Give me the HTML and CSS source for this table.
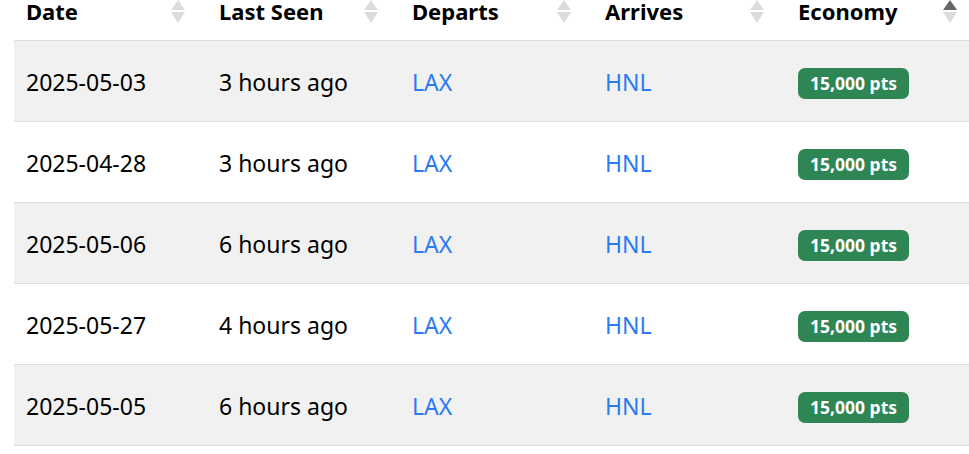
FILE: index.html
```html
<!DOCTYPE html>
<html lang="en">
<head>
<meta charset="utf-8">
<title>Awards</title>
<link rel="stylesheet" href="styles.css">
</head>
<body>
<table class="awards">
  <colgroup><col><col><col><col><col></colgroup>
  <thead>
    <tr>
      <th><div class="th-inner"><span>Date</span><svg class="sort" viewBox="0 0 14 23" width="14" height="23"><path class="up" d="M7 0 L14 10 L0 10 Z"/><path class="down" d="M0 12 L14 12 L7 23 Z"/></svg></div></th>
      <th><div class="th-inner"><span>Last Seen</span><svg class="sort" viewBox="0 0 14 23" width="14" height="23"><path class="up" d="M7 0 L14 10 L0 10 Z"/><path class="down" d="M0 12 L14 12 L7 23 Z"/></svg></div></th>
      <th><div class="th-inner"><span>Departs</span><svg class="sort" viewBox="0 0 14 23" width="14" height="23"><path class="up" d="M7 0 L14 10 L0 10 Z"/><path class="down" d="M0 12 L14 12 L7 23 Z"/></svg></div></th>
      <th><div class="th-inner"><span>Arrives</span><svg class="sort" viewBox="0 0 14 23" width="14" height="23"><path class="up" d="M7 0 L14 10 L0 10 Z"/><path class="down" d="M0 12 L14 12 L7 23 Z"/></svg></div></th>
      <th><div class="th-inner"><span>Economy</span><svg class="sort" viewBox="0 0 14 23" width="14" height="23"><path class="up active" d="M7 0 L14 10 L0 10 Z"/><path class="down" d="M0 12 L14 12 L7 23 Z"/></svg></div></th>
    </tr>
  </thead>
  <tbody>
    <tr><td>2025-05-03</td><td>3 hours ago</td><td><a href="#">LAX</a></td><td><a href="#">HNL</a></td><td><span class="badge">15,000 pts</span></td></tr>
    <tr><td>2025-04-28</td><td>3 hours ago</td><td><a href="#">LAX</a></td><td><a href="#">HNL</a></td><td><span class="badge">15,000 pts</span></td></tr>
    <tr><td>2025-05-06</td><td>6 hours ago</td><td><a href="#">LAX</a></td><td><a href="#">HNL</a></td><td><span class="badge">15,000 pts</span></td></tr>
    <tr><td>2025-05-27</td><td>4 hours ago</td><td><a href="#">LAX</a></td><td><a href="#">HNL</a></td><td><span class="badge">15,000 pts</span></td></tr>
    <tr><td>2025-05-05</td><td>6 hours ago</td><td><a href="#">LAX</a></td><td><a href="#">HNL</a></td><td><span class="badge">15,000 pts</span></td></tr>
  </tbody>
</table>
</body>
</html>
```
FILE: styles.css
```css
html, body {
  margin: 0;
  padding: 0;
  background: #fff;
  overflow: hidden;
}
body {
  font-family: "Noto Sans", "Open Sans", sans-serif;
  color: #000;
  padding-left: 14px;
}
.awards {
  border-collapse: collapse;
  table-layout: fixed;
  width: 965px;
}
.awards col {
  width: 193px;
}
.awards th {
  text-align: left;
  font-weight: 700;
  font-size: 22px;
  line-height: 22px;
  padding: 0 22px 17px 12px;
  border-bottom: 1px solid #dedede;
  color: #000;
}
.th-inner {
  display: flex;
  justify-content: space-between;
  align-items: flex-start;
}
.sort {
  flex: none;
  display: block;
}
.sort path {
  fill: #dcdcdc;
}
.sort path.active {
  fill: #666;
}
.awards td {
  height: 78px;
  padding: 2px 12px 0;
  font-size: 23px;
  vertical-align: middle;
  border-bottom: 1px solid #dedede;
  white-space: nowrap;
}
.awards tbody tr:nth-child(odd) td {
  background: #f1f1f1;
}
.awards a {
  color: #2a7bf2;
  text-decoration: none;
}
.badge {
  display: inline-block;
  background: #2e8655;
  color: #fff;
  font-weight: 700;
  font-size: 17.5px;
  line-height: 31px;
  padding: 0 12px;
  border-radius: 7px;
  vertical-align: middle;
}
```
